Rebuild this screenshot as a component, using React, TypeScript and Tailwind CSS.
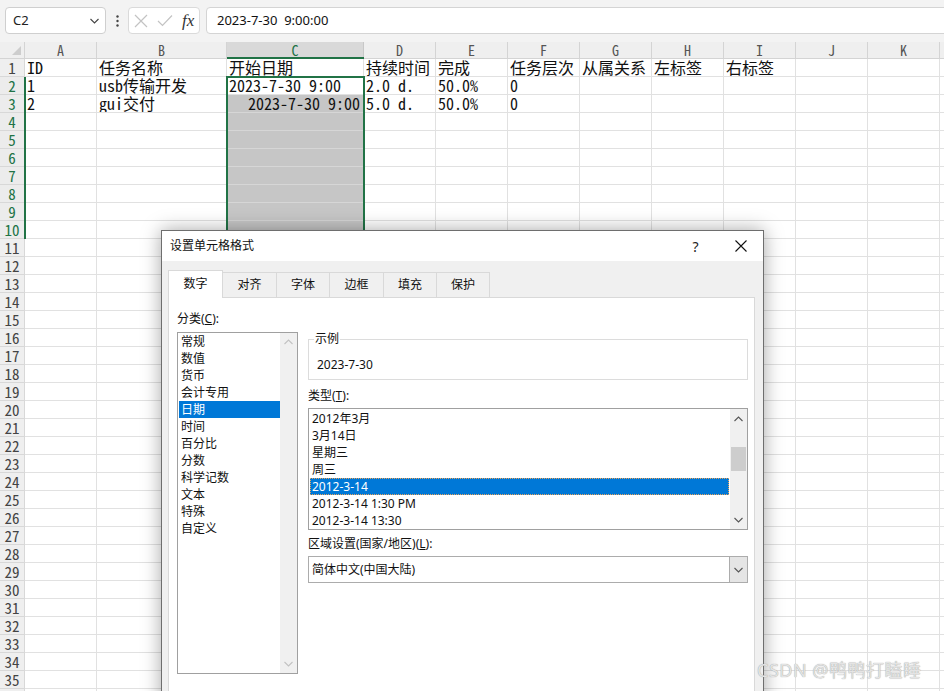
import React from 'react';

const MONO = "font-['Noto_Sans_Mono_CJK_SC','Noto_Sans_CJK_SC',monospace]";
const UI = "font-['Noto_Sans','Noto_Sans_CJK_SC',sans-serif]";

const cols = [
  { l: 'A', w: 'w-[72px]' },
  { l: 'B', w: 'w-[130px]' },
  { l: 'C', w: 'w-[137px]' },
  { l: 'D', w: 'w-[72px]' },
  { l: 'E', w: 'w-[72px]' },
  { l: 'F', w: 'w-[72px]' },
  { l: 'G', w: 'w-[72px]' },
  { l: 'H', w: 'w-[72px]' },
  { l: 'I', w: 'w-[72px]' },
  { l: 'J', w: 'w-[72px]' },
  { l: 'K', w: 'w-[72px]' },
  { l: 'L', w: 'w-[72px]' },
];

const data: Record<number, string[]> = {
  1: ['ID', '任务名称', '开始日期', '持续时间', '完成', '任务层次', '从属关系', '左标签', '右标签'],
  2: ['1', 'usb传输开发', '2023-7-30 9:00', '2.0 d.', '50.0%', '0'],
  3: ['2', 'gui交付', '2023-7-30 9:00', '5.0 d.', '50.0%', '0'],
};

function Chevron({ up, color, className }: { up?: boolean; color: string; className?: string }) {
  return (
    <svg width="9" height="6" viewBox="0 0 9 6" className={className}>
      <polyline
        points={up ? '0.5,5 4.5,1 8.5,5' : '0.5,1 4.5,5 8.5,1'}
        fill="none"
        stroke={color}
        strokeWidth="1.1"
      />
    </svg>
  );
}

function Toolbar() {
  return (
    <div className={`h-[42px] bg-[#f3f3f3] flex items-start pt-[7px] ${UI}`}>
      <div className="ml-[5px] w-[101px] h-[27px] bg-white border border-[#cfcfcf] rounded-[4px] flex items-center pl-[7px] pr-[6px] shrink-0">
        <span className="text-[13px] text-[#222] flex-1">C2</span>
        <Chevron color="#444" />
      </div>
      <div className="w-[22px] h-[27px] flex items-center justify-center shrink-0">
        <svg width="3" height="12" viewBox="0 0 3 12">
          <circle cx="1.5" cy="1.5" r="1.2" fill="#444" />
          <circle cx="1.5" cy="6" r="1.2" fill="#444" />
          <circle cx="1.5" cy="10.5" r="1.2" fill="#444" />
        </svg>
      </div>
      <div className="w-[72px] h-[27px] bg-white border border-[#dadada] rounded-[4px] flex items-center shrink-0">
        <svg width="14" height="14" viewBox="0 0 14 14" className="ml-[5px]">
          <path d="M1 1 L13 13 M13 1 L1 13" stroke="#c3c3c3" strokeWidth="1.2" />
        </svg>
        <svg width="16" height="13" viewBox="0 0 16 13" className="ml-[9px]">
          <path d="M1 7 L5.5 11.5 L15 1.5" fill="none" stroke="#c3c3c3" strokeWidth="1.2" />
        </svg>
        <span className="ml-[9px] font-['Liberation_Serif',serif] italic text-[17px] text-[#333] leading-none">fx</span>
      </div>
      <div className="ml-[6px] w-[760px] h-[27px] bg-white border border-[#d4d4d4] rounded-l-[4px] flex items-center pl-[10px] shrink-0">
        <span className="text-[13px] text-[#111] whitespace-pre">2023-7-30  9:00:00</span>
      </div>
    </div>
  );
}

function HeaderRow() {
  return (
    <div className={`flex h-[17px] ${MONO}`}>
      <div className="w-[25px] shrink-0 bg-[#efefef] border-r border-b border-[#d4d4d4] relative">
        <svg width="9" height="9" viewBox="0 0 9 9" className="absolute right-[3px] bottom-[3px]">
          <polygon points="9,0 9,9 0,9" fill="#cdcdcd" />
        </svg>
      </div>
      {cols.map((c) => (
        <div
          key={c.l}
          className={`${c.w} shrink-0 border-r border-b flex items-center justify-center text-[14px] leading-[16px] ${
            c.l === 'C'
              ? 'bg-[#d9d9d9] border-[#c8c8c8] text-[#217346]'
              : 'bg-[#efefef] border-[#d4d4d4] text-[#555]'
          }`}
        >
          {c.l}
        </div>
      ))}
    </div>
  );
}

function Row({ n }: { n: number }) {
  const vals = data[n] || [];
  const sel = n >= 2 && n <= 10;
  return (
    <div className={`flex h-[18px] ${MONO}`}>
      <div
        className={`w-[25px] shrink-0 border-r border-b border-[#d8d8d8] flex items-center justify-center text-[15px] leading-[17px] ${
          sel ? 'bg-[#ececec] text-[#217346]' : 'bg-[#efefef] text-[#444]'
        }`}
      >
        {n}
      </div>
      {cols.map((c, i) => {
        const v = vals[i] || '';
        const shaded = c.l === 'C' && n >= 3 && n <= 10;
        const right = c.l === 'C' && n === 3;
        return (
          <div
            key={c.l}
            className={`${c.w} shrink-0 border-r border-b flex items-end overflow-hidden whitespace-pre text-[16px] leading-[17px] text-[#111] ${
              shaded ? 'bg-[#c6c6c6] border-[#d6d6d6]' : 'border-[#e1e1e1]'
            } ${right ? 'justify-end pr-[3px]' : 'pl-[2px]'}`}
          >
            {v}
          </div>
        );
      })}
    </div>
  );
}

function Dialog() {
  const tabs = [
    { t: '对齐', w: 'w-[54px]' },
    { t: '字体', w: 'w-[53px]' },
    { t: '边框', w: 'w-[54px]' },
    { t: '填充', w: 'w-[53px]' },
    { t: '保护', w: 'w-[53px]' },
  ];
  const cats = ['常规', '数值', '货币', '会计专用', '日期', '时间', '百分比', '分数', '科学记数', '文本', '特殊', '自定义'];
  const types = ['2012年3月', '3月14日', '星期三', '周三', '2012-3-14', '2012-3-14 1:30 PM', '2012-3-14 13:30'];
  return (
    <div
      className={`absolute left-[161px] top-[230px] w-[603px] h-[480px] border border-[#6e6e6e] bg-[#f0f0f0] shadow-[0_0_18px_rgba(0,0,0,0.35)] flex flex-col text-[12px] text-[#111] ${UI}`}
    >
      <div className="h-[30px] bg-white flex items-center shrink-0">
        <span className="pl-[8px] flex-1 text-[12px]">设置单元格格式</span>
        <div className="w-[45px] h-[30px] flex items-center justify-center text-[14px] text-[#222]">?</div>
        <div className="w-[45px] h-[30px] flex items-center justify-center">
          <svg width="12" height="12" viewBox="0 0 12 12">
            <path d="M0.5 0.5 L11.5 11.5 M11.5 0.5 L0.5 11.5" stroke="#111" strokeWidth="1.1" />
          </svg>
        </div>
      </div>
      <div className="pl-[6px] pt-[9px] flex flex-col">
        <div className="flex items-end h-[27px]">
          <div className="relative z-10 w-[55px] h-[28px] -mb-[1px] bg-white border-l border-t border-r border-[#d9d9d9] flex items-center justify-center pb-[2px]">
            数字
          </div>
          {tabs.map((t) => (
            <div
              key={t.t}
              className={`${t.w} h-[25px] border-t border-r border-[#d9d9d9] flex items-center justify-center`}
            >
              {t.t}
            </div>
          ))}
        </div>
        <div className="w-[587px] h-[420px] bg-white border border-[#d9d9d9] flex items-start pl-[8px] pt-[13px]">
          <div className="w-[121px] flex flex-col shrink-0">
            <div className="h-[16px] leading-[16px]">
              分类(<span className="underline">C</span>):
            </div>
            <div className="mt-[5px] h-[342px] border border-[#a0a0a0] flex">
              <div className="flex-1 flex flex-col">
                {cats.map((c) => (
                  <div
                    key={c}
                    className={`h-[17px] leading-[17px] ml-[1px] pl-[2px] ${c === '日期' ? 'bg-[#0078d7] text-white' : ''}`}
                  >
                    {c}
                  </div>
                ))}
              </div>
              <div className="w-[17px] bg-[#f0f0f0] flex flex-col items-center justify-between py-[6px]">
                <Chevron up color="#c2c2c2" />
                <Chevron color="#c2c2c2" />
              </div>
            </div>
          </div>
          <div className="ml-[10px] w-[440px] mt-[28px] flex flex-col shrink-0">
            <div className="relative h-[41px] border border-[#dcdcdc]">
              <span className="absolute -top-[9px] left-[5px] px-[1px] bg-white leading-[16px]">示例</span>
              <div className="pl-[8px] pt-[17px] leading-[16px]">2023-7-30</div>
            </div>
            <div className="mt-[8px] h-[16px] leading-[16px]">
              类型(<span className="underline">T</span>):
            </div>
            <div className="mt-[4px] h-[122px] border border-[#a0a0a0] flex">
              <div className="flex-1 flex flex-col pt-[1px]">
                {types.map((t) => (
                  <div
                    key={t}
                    className={`h-[17px] leading-[15px] mx-[1px] pl-[1px] border ${
                      t === '2012-3-14' ? 'bg-[#0078d7] text-white border-dotted border-[#e9a35a]' : 'border-transparent'
                    }`}
                  >
                    {t}
                  </div>
                ))}
              </div>
              <div className="w-[17px] bg-[#f0f0f0] flex flex-col items-center pt-[7px]">
                <Chevron up color="#555" />
                <div className="mt-[25px] w-[15px] h-[24px] bg-[#cdcdcd]" />
                <div className="flex-1" />
                <Chevron color="#555" className="mb-[6px]" />
              </div>
            </div>
            <div className="mt-[6px] h-[16px] leading-[16px]">
              区域设置(国家/地区)(<span className="underline">L</span>):
            </div>
            <div className="mt-[4px] h-[27px] border border-[#acacac] flex">
              <div className="flex-1 flex items-center pl-[3px]">简体中文(中国大陆)</div>
              <div className="w-[18px] bg-[#e5e5e5] border-l border-[#acacac] flex items-center justify-center">
                <Chevron color="#555" />
              </div>
            </div>
          </div>
        </div>
      </div>
    </div>
  );
}

export default function App() {
  const rows = Array.from({ length: 36 }, (_, i) => i + 1);
  return (
    <div className="relative w-[944px] h-[691px] overflow-hidden bg-white">
      <Toolbar />
      <HeaderRow />
      {rows.map((n) => (
        <Row key={n} n={n} />
      ))}
      <div className="absolute left-[226px] top-[76px] w-[139px] h-[164px] border-2 border-[#217346] pointer-events-none" />
      <div className="absolute left-[227px] top-[57px] w-[137px] h-[2px] bg-[#217346]" />
      <div className="absolute left-[24px] top-[77px] w-[2px] h-[162px] bg-[#217346]" />
      <Dialog />
      <div className="absolute left-[757px] top-[657px] text-[18px] tracking-[0.5px] font-['Noto_Sans','Noto_Sans_CJK_SC',sans-serif] text-[#e4e4e4] [text-shadow:0_0_1px_#8a8a8a]">
        CSDN @鸭鸭打瞌睡
      </div>
    </div>
  );
}
